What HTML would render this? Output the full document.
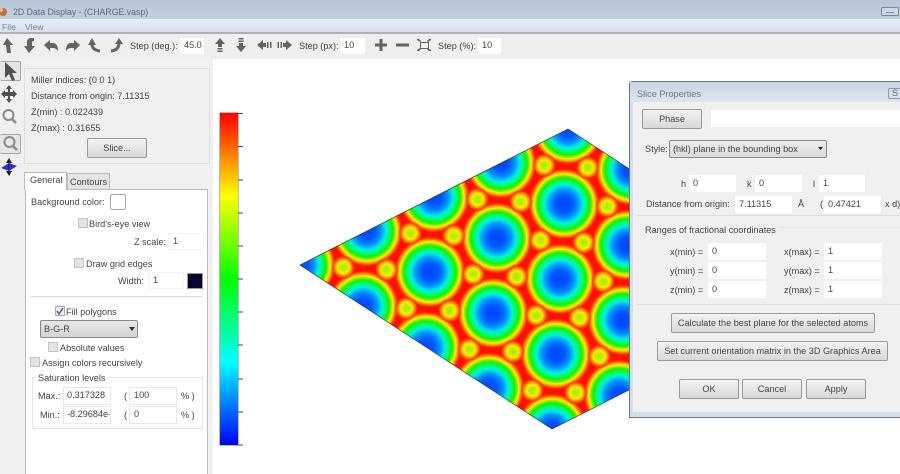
<!DOCTYPE html>
<html>
<head>
<meta charset="utf-8">
<style>
html,body{margin:0;padding:0;width:900px;height:474px;overflow:hidden;background:#fff}
#root{position:relative;width:900px;height:474px;overflow:hidden;font-family:"Liberation Sans",sans-serif;font-size:9.15px;color:#444;filter:blur(.35px)}
#root div,#root svg{position:absolute}
.t{white-space:nowrap;line-height:12px;height:12px;margin-top:1px}
.i{background:#fff;border:1px solid #f4f4f4;box-sizing:border-box;line-height:15px;padding-left:4px;white-space:nowrap;overflow:hidden;color:#444}
.b{background:linear-gradient(#f4f4f4,#d8d8d8);border:1px solid #9a9a9a;border-radius:2px;box-sizing:border-box;text-align:center;white-space:nowrap;color:#444}
.c{width:10px;height:10px;background:#e4e4e4;border:1px solid #c4c4c4;box-sizing:border-box}
.l{background:#dcdcdc;height:1px}
</style>
</head>
<body>
<div id="root">
  <!-- title bar -->
  <div style="left:0;top:0;width:900px;height:19px;background:linear-gradient(#b7c7d8,#c3d0e0)"></div>
  <div style="left:0;top:19px;width:900px;height:14px;background:linear-gradient(#e6eefa,#d9dfee)"></div>
  <div style="left:0;top:32px;width:900px;height:2px;background:#b0b0b8"></div>
  <svg style="left:0;top:5px" width="12" height="14"><circle cx="3" cy="7" r="4" fill="#c07040"/><circle cx="1" cy="5" r="2" fill="#e0c090"/></svg>
  <div class="t" style="left:13px;top:5px;color:#5a6a7a;font-size:8.75px">2D Data Display - (CHARGE.vasp)</div>
  <div class="t" style="left:2px;top:20px;color:#7a8088;font-size:8.6px">File</div>
  <div class="t" style="left:25px;top:20px;color:#7a8088;font-size:8.6px">View</div>
  <div style="left:881px;top:7px;width:18px;height:9px;border:1px solid #7a8794;border-radius:2px;box-sizing:border-box;background:#d0dae6"></div>
  <div style="left:886px;top:12px;width:8px;height:1px;background:#889"></div>
  <!-- toolbar -->
  <div style="left:0;top:34px;width:900px;height:25px;background:#efefef"></div>
  <div style="left:0;top:59px;width:213px;height:415px;background:#f0f0f0"></div>
  <svg style="left:0;top:0" width="450" height="60" fill="#636363">
    <path d="M7 38l6 7h-3l1 8h-4l-1-8h-3z"/>
    <path d="M29 53l-5-7h3v-4q0-3 3-4h4v3q-2 0-2 2v3h3z"/>
    <path d="M44 45l6-5v3h3q5 0 5 8q-2-3-5-3h-3v3z"/>
    <path d="M80 45l-6-5v3h-3q-5 0-5 8q2-3 5-3h3v3z"/>
    <path d="M88 45l4-7 4 7z"/><path d="M92 44q0 6 8 7" fill="none" stroke="#636363" stroke-width="3"/>
    <path d="M115 44l4-6 4 6z"/><path d="M119 43q0 7-8 8" fill="none" stroke="#636363" stroke-width="3"/>
    <path d="M220 38l5 6h-3v3h-4v-3h-3z"/><rect x="217.500" y="48" width="5" height="1.500"/><rect x="217.500" y="50.500" width="5" height="1.500"/>
    <path d="M241 52l5-6h-3v-3h-4v3h-3z"/><rect x="238.500" y="38" width="5" height="1.500"/><rect x="238.500" y="40.500" width="5" height="1.500"/>
    <path d="M257 45l6-5v3h3v4h-3v3z"/><rect x="267" y="42" width="1.500" height="6"/><rect x="270" y="42" width="1.500" height="6"/>
    <path d="M292 45l-6-5v3h-3v4h3v3z"/><rect x="280.500" y="42" width="1.500" height="6"/><rect x="277.500" y="42" width="1.500" height="6"/>
    <rect x="375" y="43.500" width="12" height="3"/><rect x="379.500" y="39" width="3" height="12"/>
    <rect x="396" y="43.500" width="13" height="3"/>
    <rect x="420.500" y="42.500" width="8" height="6" fill="none" stroke="#666"/>
    <path d="M417 39h2l2 2-1 1-3-2zM431 39h-2l-2 2 1 1 3-2zM417 51h2l2-2-1-1-3 2zM431 51h-2l-2-2 1-1 3 2z"/>
  </svg>
  <div class="t" style="left:130px;top:39px">Step (deg.):</div>
  <div class="i" style="left:180px;top:38px;width:24px;height:16px;border:0">45.0</div>
  <div class="t" style="left:299px;top:39px">Step (px):</div>
  <div class="i" style="left:340px;top:38px;width:25px;height:16px;border:0">10</div>
  <div class="t" style="left:438px;top:39px">Step (%):</div>
  <div class="i" style="left:478px;top:38px;width:23px;height:16px;border:0">10</div>

  <!-- left tool column -->
  <div style="left:0;top:61px;width:21px;height:20px;background:#e6e6e6;border:1px solid #a8a8a8;border-left:0;border-radius:2px;box-sizing:border-box"></div>
  <div style="left:0;top:134px;width:21px;height:20px;background:#e6e6e6;border:1px solid #a8a8a8;border-left:0;border-radius:2px;box-sizing:border-box"></div>
  <svg style="left:0;top:58px" width="24" height="120">
    <path d="M5 4v16l4-4 3 7 3-1-3-7h5z" fill="#505050"/>
    <path d="M9 27l3 4h-2v3h3v-2l4 4-4 4v-2h-3v3h2l-3 4-3-4h2v-3h-3v2l-4-4 4-4v2h3v-3h-2z" fill="#505050"/>
    <circle cx="8.500" cy="57" r="5" fill="none" stroke="#8a8a8a" stroke-width="2"/><path d="M12 61l4 4" stroke="#8a8a8a" stroke-width="2.500"/>
    <circle cx="9.500" cy="84" r="5" fill="none" stroke="#8a8a8a" stroke-width="2"/><path d="M13 88l4 4" stroke="#8a8a8a" stroke-width="2.500"/>
    <path d="M1 110l8-5 8 3-8 5z" fill="#2f2fd8"/>
    <path d="M9 100l3 5h-6zM9 118l3-5h-6z" fill="#222"/><path d="M9 104v10" stroke="#222"/>
  </svg>

  <!-- info box -->
  <div style="left:24px;top:68px;width:186px;height:96px;border:1px solid #e0e0e0;box-sizing:border-box"></div>
  <div class="t" style="left:31px;top:73px">Miller indices: (0 0 1)</div>
  <div class="t" style="left:31px;top:89px">Distance from origin: 7.11315</div>
  <div class="t" style="left:31px;top:105px">Z(min) : 0.022439</div>
  <div class="t" style="left:31px;top:121px">Z(max) : 0.31655</div>
  <div class="b" style="left:87px;top:138px;width:60px;height:20px;line-height:19px">Slice...</div>

  <!-- tabs -->
  <div style="left:25px;top:189px;width:183px;height:290px;background:#fff;border:1px solid #bcbcbc;box-sizing:border-box"></div>
  <div style="left:67px;top:173px;width:43px;height:17px;background:#e4e4e4;border:1px solid #bcbcbc;box-sizing:border-box"></div>
  <div class="t" style="left:70px;top:175px">Contours</div>
  <div style="left:24px;top:172px;width:43px;height:18px;background:#fff;border:1px solid #bcbcbc;border-bottom:0;box-sizing:border-box"></div>
  <div class="t" style="left:30px;top:173px">General</div>

  <div class="t" style="left:31px;top:195px">Background color:</div>
  <div style="left:110px;top:194px;width:16px;height:16px;background:#fff;border:1px solid #a8a8a8;border-radius:2px;box-sizing:border-box"></div>
  <div class="c" style="left:78px;top:218px"></div>
  <div class="t" style="left:89px;top:217px">Bird's-eye view</div>
  <div class="t" style="left:134px;top:235px">Z scale:</div>
  <div class="i" style="left:168px;top:233px;width:36px;height:17px">1</div>
  <div class="c" style="left:74px;top:258px"></div>
  <div class="t" style="left:86px;top:257px">Draw grid edges</div>
  <div class="t" style="left:118px;top:274px">Width:</div>
  <div class="i" style="left:148px;top:272px;width:36px;height:17px">1</div>
  <div style="left:187px;top:273px;width:16px;height:16px;background:#06062e;border:1px solid #999;box-sizing:border-box"></div>
  <div class="l" style="left:30px;top:296px;width:173px"></div>
  <div class="c" style="left:55px;top:306px;background:#e8eef6;border-color:#aab"></div>
  <svg style="left:55px;top:306px" width="10" height="10"><path d="M2 5l2 3 4-6" fill="none" stroke="#456" stroke-width="1.300"/></svg>
  <div class="t" style="left:66px;top:305px">Fill polygons</div>
  <div class="b" style="left:40px;top:320px;width:98px;height:18px;line-height:17px;text-align:left;padding-left:3px;background:linear-gradient(#e8e8e8,#d4d4d4);border-color:#888">B-G-R</div>
  <svg style="left:128px;top:326px" width="8" height="6"><path d="M1 1h6l-3 4z" fill="#333"/></svg>
  <div class="c" style="left:48px;top:342px"></div>
  <div class="t" style="left:60px;top:341px">Absolute values</div>
  <div class="c" style="left:30px;top:357px"></div>
  <div class="t" style="left:42px;top:356px">Assign colors recursively</div>
  <div style="left:32px;top:377px;width:171px;height:52px;border:1px solid #e6e6e6;box-sizing:border-box"></div>
  <div class="t" style="left:36px;top:371px;background:#fff;padding:0 2px">Saturation levels</div>
  <div class="t" style="left:38px;top:389px">Max.:</div>
  <div class="i" style="left:63px;top:387px;width:48px;height:18px;border-color:#e8e8e8;padding-left:3px">0.317328</div>
  <div class="t" style="left:124px;top:389px">(</div>
  <div class="i" style="left:129px;top:387px;width:48px;height:18px;border-color:#e8e8e8">100</div>
  <div class="t" style="left:181px;top:389px">% )</div>
  <div class="t" style="left:40px;top:408px">Min.:</div>
  <div class="i" style="left:63px;top:406px;width:48px;height:18px;border-color:#e8e8e8;padding-left:3px">-8.29684e-</div>
  <div class="t" style="left:124px;top:408px">(</div>
  <div class="i" style="left:129px;top:406px;width:48px;height:18px;border-color:#e8e8e8">0</div>
  <div class="t" style="left:181px;top:408px">% )</div>

  <!-- color bar -->
  <div style="left:220px;top:113px;width:18px;height:332px;background:linear-gradient(#ff0000,#ffff00 25%,#00ff00 50%,#00ffff 75%,#0000ff);box-shadow:0 0 0 .5px #777"></div>
  <svg style="left:238px;top:110px" width="8" height="340" stroke="#444" stroke-width="1">
    <path d="M0 3.500h5M0 36.500h5M0 70h5M0 103h5M0 136h5M0 169h5M0 202h5M0 235h5M0 269h5M0 302h5M0 335h5"/>
  </svg>

  <!-- contour plot -->
  <svg style="left:0;top:0" width="900" height="474">
    <defs>
      <clipPath id="rh"><path d="M300 265L568 129L820 293L552 429Z"/></clipPath>
      <radialGradient id="gc" gradientUnits="userSpaceOnUse" cx="0" cy="0" r="36">
        <stop offset="0" stop-color="#0044ff"/>
        <stop offset=".22" stop-color="#0055ff"/>
        <stop offset=".39" stop-color="#0090ff"/>
        <stop offset=".53" stop-color="#00f0e0"/>
        <stop offset=".64" stop-color="#00ff60"/>
        <stop offset=".72" stop-color="#18f000"/>
        <stop offset=".79" stop-color="#90f000"/>
        <stop offset=".83" stop-color="#f8f000"/>
        <stop offset=".89" stop-color="#ffa000"/>
        <stop offset=".94" stop-color="#ff4000"/>
        <stop offset="1" stop-color="#ff1000" stop-opacity="0"/>
      </radialGradient>
      <radialGradient id="gd" gradientUnits="userSpaceOnUse" cx="0" cy="0" r="12">
        <stop offset="0" stop-color="#a8e800"/>
        <stop offset=".33" stop-color="#c8f000"/>
        <stop offset=".5" stop-color="#f8f000"/>
        <stop offset=".67" stop-color="#ffa000"/>
        <stop offset=".85" stop-color="#ff4000"/>
        <stop offset="1" stop-color="#ff1000" stop-opacity="0"/>
      </radialGradient>
      <circle id="c0" r="36" fill="url(#gc)"/>
      <g id="d0"><circle r="12" fill="url(#gd)" transform="translate(43.33 2.33)"/><circle r="12" fill="url(#gd)" transform="translate(86.67 4.67)"/></g>
      <g id="cr"><use href="#c0"/><use href="#c0" x="67" y="-34"/><use href="#c0" x="134" y="-68"/><use href="#c0" x="201" y="-102"/><use href="#c0" x="268" y="-136"/></g>
      <g id="dr"><use href="#d0"/><use href="#d0" x="67" y="-34"/><use href="#d0" x="134" y="-68"/><use href="#d0" x="201" y="-102"/></g>
    </defs>
    <g clip-path="url(#rh)">
      <rect x="290" y="120" width="540" height="320" fill="#ff1000"/>
      <g transform="translate(300 265)">
        <use href="#cr"/><use href="#cr" x="63" y="41"/><use href="#cr" x="126" y="82"/><use href="#cr" x="189" y="123"/><use href="#cr" x="252" y="164"/>
        <use href="#dr"/><use href="#dr" x="63" y="41"/><use href="#dr" x="126" y="82"/><use href="#dr" x="189" y="123"/>
      </g>
    </g>
    <path d="M300 265L568 129L820 293L552 429Z" fill="none" stroke="#333" stroke-width=".7"/>
  </svg>

  <!-- dialog -->
  <div style="left:629px;top:81px;width:280px;height:337px;background:#d4dfeb;border:1px solid #68788a;border-radius:3px 3px 0 0;box-sizing:border-box"></div>
  <div style="left:630px;top:82px;width:270px;height:20px;background:linear-gradient(#c8d5e3,#dce6f0)"></div>
  <div class="t" style="left:637px;top:87px;color:#6a7a8a">Slice Properties</div>
  <div style="left:888px;top:88px;width:14px;height:11px;border:1px solid #8a98a8;border-radius:2px;box-sizing:border-box;color:#666;font-size:9px;line-height:9px;padding-left:3px">S</div>
  <div style="left:633px;top:102px;width:267px;height:310px;background:#f0f0f0"></div>
  <div class="b" style="left:642px;top:109px;width:60px;height:20px;line-height:19px">Phase</div>
  <div class="i" style="left:711px;top:110px;width:189px;height:17px;border:0"></div>
  <div class="t" style="left:645px;top:142px">Style:</div>
  <div class="b" style="left:669px;top:140px;width:158px;height:18px;line-height:17px;text-align:left;padding-left:3px;background:linear-gradient(#ececec,#dcdcdc);border-color:#888">(hkl) plane in the bounding box</div>
  <svg style="left:817px;top:146px" width="8" height="6"><path d="M1 1h5l-2.500 3z" fill="#222"/></svg>
  <div class="t" style="left:681px;top:177px">h</div>
  <div class="i" style="left:689px;top:175px;width:47px;height:17px;border:0;line-height:16px">0</div>
  <div class="t" style="left:747px;top:177px">k</div>
  <div class="i" style="left:755px;top:175px;width:47px;height:17px;border:0;line-height:16px">0</div>
  <div class="t" style="left:813px;top:177px">l</div>
  <div class="i" style="left:819px;top:175px;width:46px;height:17px;border:0;line-height:16px">1</div>
  <div class="t" style="left:646px;top:197px">Distance from origin:</div>
  <div class="i" style="left:735px;top:196px;width:57px;height:17px;border:0;line-height:16px">7.11315</div>
  <div class="t" style="left:798px;top:197px">Å</div>
  <div class="t" style="left:820px;top:197px">(</div>
  <div class="i" style="left:824px;top:196px;width:57px;height:17px;border:0;line-height:16px">0.47421</div>
  <div class="t" style="left:885px;top:197px">x d)</div>
  <div class="l" style="left:636px;top:215px;width:264px"></div>
  <div class="t" style="left:645px;top:223px">Ranges of fractional coordinates</div>
  <div class="l" style="left:780px;top:227px;width:120px;background:#e4e4e4"></div>
  <div class="t" style="left:670px;top:245px">x(min) =</div>
  <div class="i" style="left:708px;top:243px;width:58px;height:17px;border:0;line-height:16px">0</div>
  <div class="t" style="left:784px;top:245px">x(max) =</div>
  <div class="i" style="left:824px;top:243px;width:58px;height:17px;border:0;line-height:16px">1</div>
  <div class="t" style="left:670px;top:264px">y(min) =</div>
  <div class="i" style="left:708px;top:262px;width:58px;height:17px;border:0;line-height:16px">0</div>
  <div class="t" style="left:784px;top:264px">y(max) =</div>
  <div class="i" style="left:824px;top:262px;width:58px;height:17px;border:0;line-height:16px">1</div>
  <div class="t" style="left:670px;top:283px">z(min) =</div>
  <div class="i" style="left:708px;top:281px;width:58px;height:17px;border:0;line-height:16px">0</div>
  <div class="t" style="left:784px;top:283px">z(max) =</div>
  <div class="i" style="left:824px;top:281px;width:58px;height:17px;border:0;line-height:16px">1</div>
  <div class="l" style="left:636px;top:304px;width:264px"></div>
  <div class="b" style="left:671px;top:313px;width:204px;height:20px;line-height:19px">Calculate the best plane for the selected atoms</div>
  <div class="b" style="left:657px;top:341px;width:231px;height:20px;line-height:19px">Set current orientation matrix in the 3D Graphics Area</div>
  <div class="b" style="left:679px;top:379px;width:60px;height:20px;line-height:19px">OK</div>
  <div class="b" style="left:742px;top:379px;width:60px;height:20px;line-height:19px">Cancel</div>
  <div class="b" style="left:806px;top:379px;width:60px;height:20px;line-height:19px">Apply</div>
</div>
</body>
</html>
